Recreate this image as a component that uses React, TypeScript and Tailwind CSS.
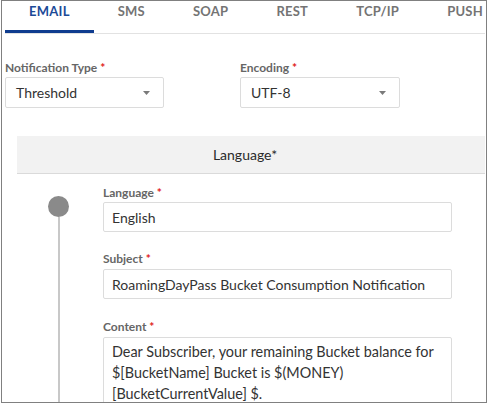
import React from "react";

const tabs = ["EMAIL", "SMS", "SOAP", "REST", "TCP/IP", "PUSH"];

function Label({ text }: { text: string }) {
  return (
    <div className="text-[12px] leading-[14px] font-bold text-[#666]">
      {text} <span className="text-[#e02020]">*</span>
    </div>
  );
}

function Caret() {
  return (
    <svg width="7" height="4" viewBox="0 0 7 4" className="block">
      <path d="M0 0 L7 0 L3.5 4 Z" fill="#7a7a7a" />
    </svg>
  );
}

function Select({ value, width }: { value: string; width: string }) {
  return (
    <div
      className={`${width} h-[31px] mt-[2px] border border-[#dcdcdc] rounded-[2px] flex items-center justify-between pl-[10px] pr-[13px] text-[14px] text-[#333]`}
    >
      <span>{value}</span>
      <Caret />
    </div>
  );
}

export default function App() {
  return (
    <div className="pl-px" style={{ fontFamily: "Lato, 'Noto Sans', sans-serif" }}>
      <div className="w-[486px] h-[403px] border border-[#808080] overflow-hidden bg-white">
        {/* Tabs */}
        <div className="ml-[3px] w-[480px] flex border-b border-[#e2e2e2]">
          {tabs.map((t, i) => (
            <div
              key={t}
              className={`h-[32px] shrink-0 px-[24px] pt-[1px] text-[13px] leading-[18px] font-bold tracking-[0.25px] ${
                i === 0
                  ? "text-[#1c4a97] border-b-[3px] border-[#0f3c8f]"
                  : "text-[#747474]"
              }`}
            >
              {t}
            </div>
          ))}
        </div>

        {/* Selects */}
        <div className="mt-[27px] ml-[3px] flex">
          <div className="w-[235px]">
            <Label text="Notification Type" />
            <Select value="Threshold" width="w-[159px]" />
          </div>
          <div>
            <Label text="Encoding" />
            <Select value="UTF-8" width="w-[160px]" />
          </div>
        </div>

        {/* Language header */}
        <div className="mt-[28px] ml-[15px] w-[468px] h-[38px] bg-[#f2f2f2] border-b border-[#dadada] flex items-center justify-center pr-[12px] text-[14px] text-[#2a2a2a]">
          Language*
        </div>

        {/* Timeline + fields */}
        <div className="flex">
          <div className="w-[101px] pl-[46px] pt-[22px] flex">
            <div className="w-[21px] flex flex-col items-center">
              <div className="w-[21px] h-[21px] rounded-full bg-[#8a8a8a]" />
              <div className="w-[2px] h-[200px] bg-[#c8c8c8]" />
            </div>
          </div>
          <div className="w-[349px] pt-[12px]">
            <Label text="Language" />
            <div className="mt-[2px] h-[30px] border border-[#dcdcdc] rounded-[2px] flex items-center pl-[8px] text-[14px] text-[#333]">
              English
            </div>
            <div className="mt-[20px]">
              <Label text="Subject" />
            </div>
            <div className="mt-[3px] h-[30px] border border-[#dcdcdc] rounded-[2px] flex items-center pl-[8px] text-[14px] text-[#333]">
              RoamingDayPass Bucket Consumption Notification
            </div>
            <div className="mt-[21px]">
              <Label text="Content" />
            </div>
            <div className="mt-[3px] h-[120px] border border-[#dcdcdc] rounded-[2px] pl-[8px] pr-[6px] pt-[3px] text-[14.4px] leading-[21px] text-[#333]">
              Dear Subscriber, your remaining Bucket balance for $[BucketName] Bucket is $(MONEY) [BucketCurrentValue] $.
            </div>
          </div>
        </div>
      </div>
    </div>
  );
}
